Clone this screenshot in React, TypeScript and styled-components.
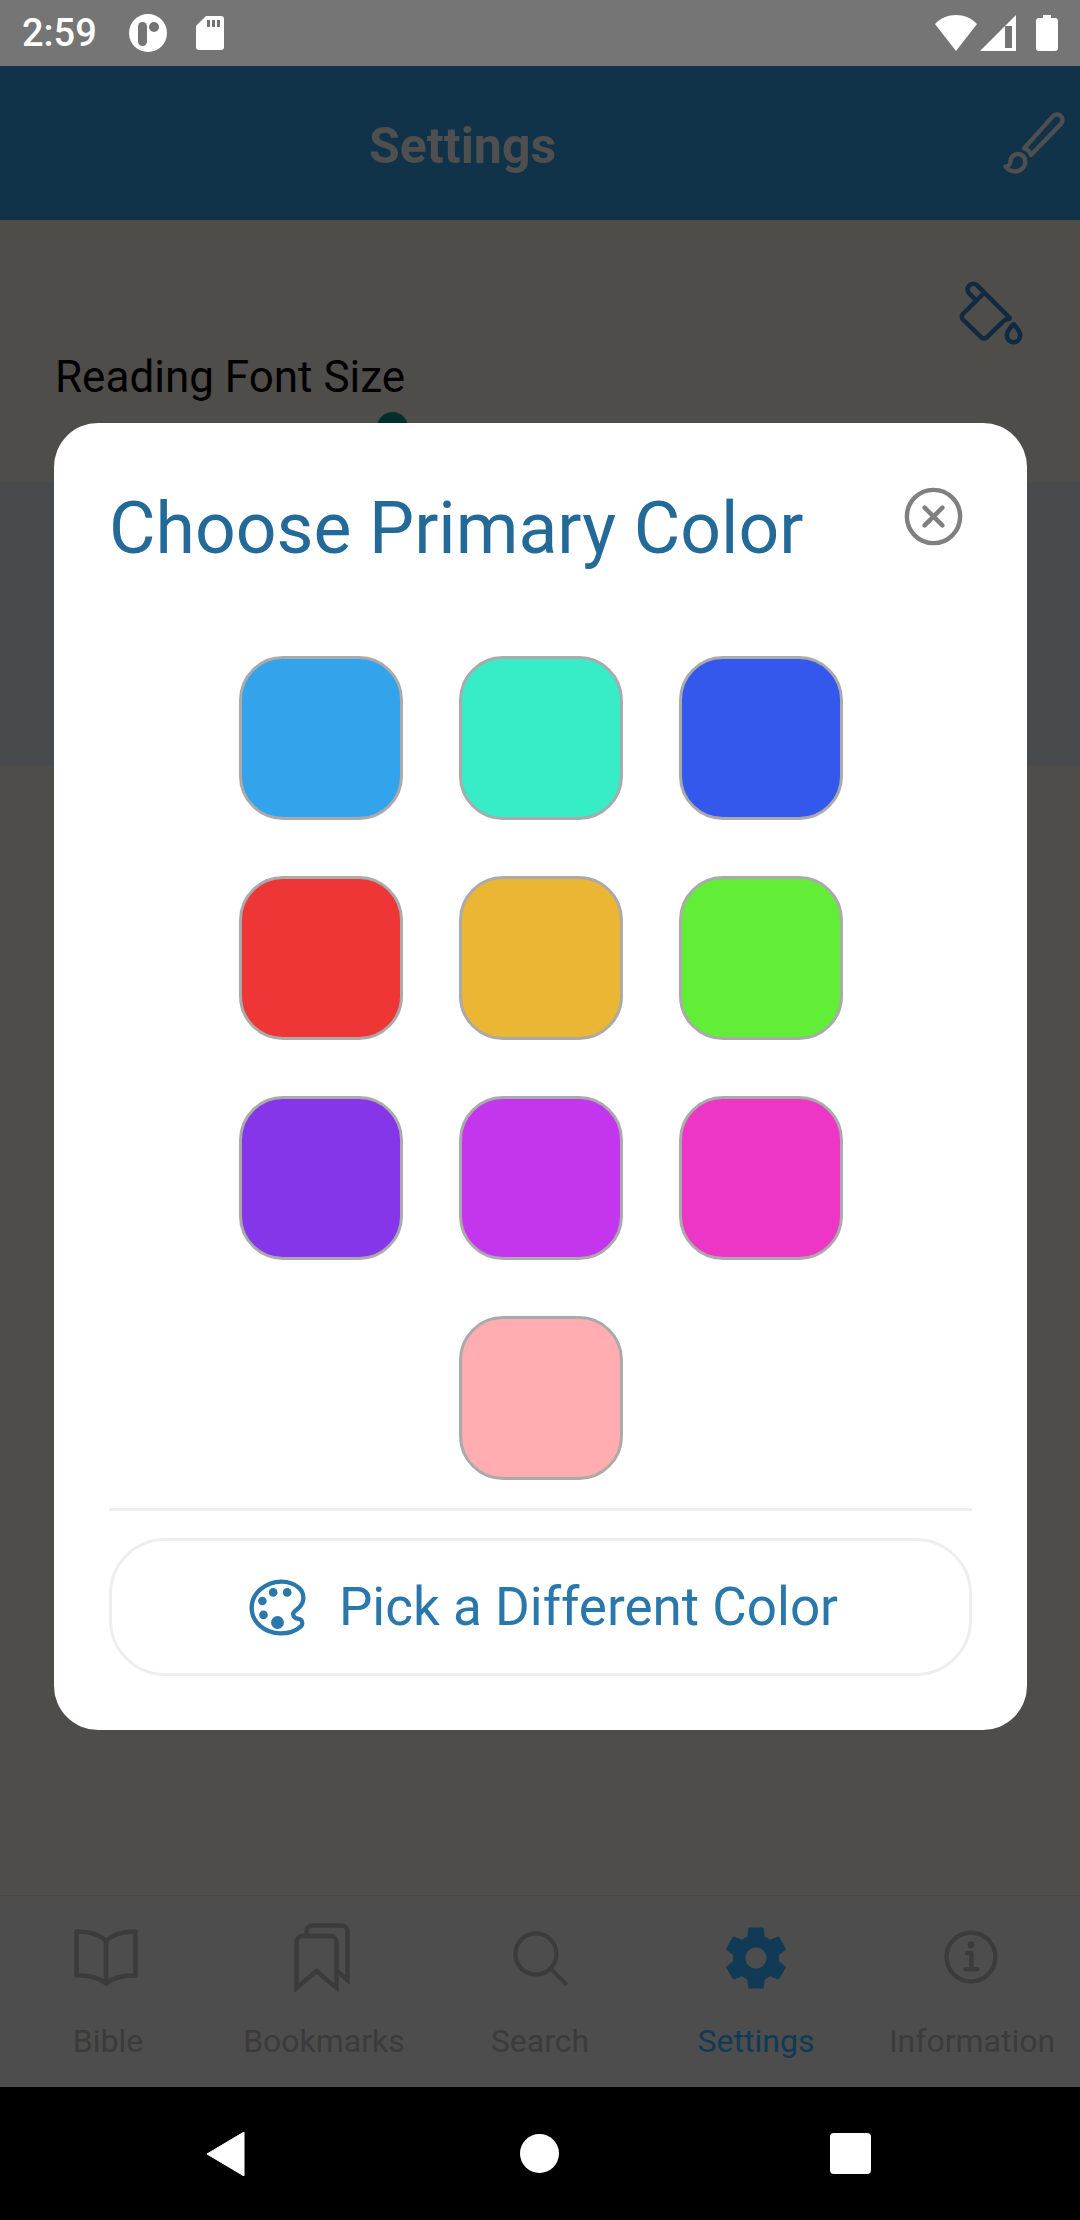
import styled, { createGlobalStyle } from "styled-components";
import {
  IoBrushOutline,
  IoCloseCircleOutline,
  IoColorFillOutline,
  IoColorPaletteOutline,
  IoInformationCircleOutline,
  IoSearchOutline,
  IoSettingsSharp,
} from "react-icons/io5";

const swatches = [
  "#33a3ec",
  "#36edc8",
  "#3458ec",
  "#ee3636",
  "#eab634",
  "#62ee36",
  "#8436e8",
  "#c436ee",
  "#ee36c6",
  "#ffadb0",
];

const BibleIcon = () => (
  <svg width="68" height="58" viewBox="0 0 68 58" fill="none" stroke="currentColor" strokeWidth="4.5" strokeLinejoin="round">
    <path d="M32 12C25 5 15 2.500 4 2.500H2.500V46.500H6C16 46.500 25 49 32 54.500C39 49 48 46.500 58 46.500H61.500V2.500H60C49 2.500 39 5 32 12V54" />
  </svg>
);

const BookmarksIcon = () => (
  <svg width="60" height="72" viewBox="0 0 60 72" fill="none" stroke="currentColor" strokeWidth="4.5">
    <path d="M2.500 20a6 6 0 0 1 6-6h28a6 6 0 0 1 6 6v46L22.500 49 2.500 66z" />
    <path d="M12.500 14V9.500a6 6 0 0 1 6-6h29a6 6 0 0 1 6 6V58L43 49" />
  </svg>
);

const tabs = [
  { label: "Bible", Icon: BibleIcon },
  { label: "Bookmarks", Icon: BookmarksIcon },
  { label: "Search", Icon: () => <IoSearchOutline size={67} /> },
  { label: "Settings", Icon: () => <IoSettingsSharp size={68} />, active: true },
  { label: "Information", Icon: () => <IoInformationCircleOutline size={68} /> },
];

export default function App() {
  return (
    <Page>
      <GlobalStyle />
      <StatusBar>
        <StatusLeft>
          <Clock>2:59</Clock>
          <svg width="38" height="38" viewBox="0 0 38 38">
            <circle cx="19" cy="19" r="19" fill="#fff" />
            <rect x="9" y="8" width="9" height="24" rx="4.500" fill="#757575" />
            <circle cx="25" cy="13" r="5" fill="#757575" />
          </svg>
          <svg width="28" height="34" viewBox="0 0 28 34">
            <path
              d="M10 0h15a3 3 0 0 1 3 3v28a3 3 0 0 1-3 3H3a3 3 0 0 1-3-3V10z"
              fill="#fff"
            />
            <path d="M11 4h3v7h-3zM16 4h3v7h-3zM21 4h3v7h-3z" fill="#757575" />
          </svg>
        </StatusLeft>
        <StatusRight>
          <svg width="42" height="36" viewBox="0 0 42 36">
            <path d="M0 9C11-3 31-3 42 9L21 36z" fill="#fff" />
          </svg>
          <svg width="36" height="36" viewBox="0 0 36 36">
            <path d="M36 0v36H0z" fill="#fff" />
            <path d="M25 11h7v22h-7z" fill="#757575" />
          </svg>
          <BatteryIcon width="22" height="36" viewBox="0 0 22 36">
            <path
              d="M7 0h8v3h4a3 3 0 0 1 3 3v27a3 3 0 0 1-3 3H3a3 3 0 0 1-3-3V6a3 3 0 0 1 3-3h4z"
              fill="#fff"
            />
          </BatteryIcon>
        </StatusRight>
      </StatusBar>

      <Header>
        <HeaderTitle>Settings</HeaderTitle>
        <IoBrushOutline size={70} color="#4f4f4f" />
      </Header>

      <Content>
        <FontSection>
          <BucketRow>
            <IoColorFillOutline size={72} color="#0f2a42" />
          </BucketRow>
          <FontLabel>Reading Font Size</FontLabel>
          <SliderThumb />
        </FontSection>
        <Band />
      </Content>

      <TabBar>
        {tabs.map(({ label, Icon, active }) => (
          <Tab key={label} $active={active}>
            <TabIcon>
              <Icon />
            </TabIcon>
            <TabLabel>{label}</TabLabel>
          </Tab>
        ))}
      </TabBar>

      <NavBar>
        <svg width="40" height="44" viewBox="0 0 40 44">
          <path d="M38 0v44L1 22z" fill="#fff" stroke="#fff" strokeLinejoin="round" />
        </svg>
        <HomeDot />
        <RecentSquare />
      </NavBar>

      <Modal>
        <ModalHead>
          <ModalTitle>Choose Primary Color</ModalTitle>
          <CloseIcon size={71} color="#808080" />
        </ModalHead>
        <SwatchGrid>
          {swatches.map((color) => (
            <Swatch key={color} $color={color} />
          ))}
        </SwatchGrid>
        <Divider />
        <PickButton>
          <IoColorPaletteOutline size={69} />
          Pick a Different Color
        </PickButton>
      </Modal>
    </Page>
  );
}

const GlobalStyle = createGlobalStyle`
  html, body {
    margin: 0;
    padding: 0;
    background: #000;
  }
  body {
    font-family: Roboto, "Liberation Sans", sans-serif;
  }
`;

const Page = styled.div`
  position: relative;
  display: flex;
  flex-direction: column;
  width: 1080px;
  height: 2220px;
  overflow: hidden;
`;

const StatusBar = styled.div`
  display: flex;
  align-items: center;
  justify-content: space-between;
  height: 66px;
  padding: 0 22px;
  background: #757575;
`;

const StatusLeft = styled.div`
  display: flex;
  align-items: center;
  gap: 29px;
`;

const StatusRight = styled.div`
  display: flex;
  align-items: center;
  gap: 3px;
`;

const BatteryIcon = styled.svg`
  margin-left: 17px;
`;

const Clock = styled.span`
  color: #fff;
  font-size: 38px;
  font-weight: 500;
  margin-right: 3px;
`;

const Header = styled.div`
  display: flex;
  align-items: center;
  justify-content: space-between;
  height: 154px;
  padding: 0 11px 0 369px;
  background: #10334a;
`;

const HeaderTitle = styled.h1`
  margin: 5px 0 0;
  color: #4f4f4f;
  font-size: 50px;
  font-weight: 700;
`;

const Content = styled.div`
  flex: 1;
  display: flex;
  flex-direction: column;
  background: #4f4d49;
`;

const FontSection = styled.div`
  display: flex;
  flex-direction: column;
  box-sizing: border-box;
  height: 262px;
  padding: 57px 55px 0;
  overflow: hidden;
`;

const BucketRow = styled.div`
  display: flex;
  justify-content: flex-end;
  height: 74px;
  margin-right: -2px;
`;

const FontLabel = styled.div`
  color: #000;
  font-size: 44px;
  line-height: 52px;
`;

const SliderThumb = styled.div`
  width: 31px;
  height: 31px;
  margin: 9px 0 0 322px;
  border-radius: 50%;
  background: #052f2d;
`;

const Band = styled.div`
  height: 283px;
  background: #484b4e;
`;

const TabBar = styled.div`
  display: grid;
  grid-template-columns: repeat(5, 1fr);
  box-sizing: border-box;
  height: 192px;
  background: #4d4d4d;
  border-top: 1px solid #464646;
`;

const Tab = styled.div<{ $active?: boolean }>`
  display: flex;
  flex-direction: column;
  align-items: center;
  color: ${(p) => (p.$active ? "#103a55" : "#3b3b3b")};
`;

const TabIcon = styled.div`
  display: flex;
  align-items: center;
  justify-content: center;
  height: 82px;
  margin-top: 21px;
`;

const TabLabel = styled.span`
  margin-top: 22px;
  font-size: 32px;
  line-height: 40px;
`;

const NavBar = styled.div`
  display: flex;
  align-items: center;
  justify-content: space-between;
  height: 133px;
  padding: 0 209px 0 206px;
  background: #000;
`;

const HomeDot = styled.div`
  width: 39px;
  height: 39px;
  margin-left: 3px;
  border-radius: 50%;
  background: #fff;
`;

const RecentSquare = styled.div`
  width: 41px;
  height: 41px;
  border-radius: 4px;
  background: #fff;
`;

const Modal = styled.div`
  position: absolute;
  top: 423px;
  left: 54px;
  box-sizing: border-box;
  width: 973px;
  height: 1307px;
  padding: 0 55px;
  border-radius: 44px;
  background: #fff;
`;

const ModalHead = styled.div`
  display: flex;
  align-items: flex-start;
  justify-content: space-between;
  box-sizing: border-box;
  height: 168px;
  padding-top: 58px;
  margin-bottom: 7px;
`;

const CloseIcon = styled(IoCloseCircleOutline)`
  margin-right: 3px;
`;

const ModalTitle = styled.h2`
  margin: 9px 0 0;
  color: #246a99;
  font-size: 71.500px;
  font-weight: 400;
  line-height: 77px;
`;

const SwatchGrid = styled.div`
  display: flex;
  flex-wrap: wrap;
  justify-content: center;
  gap: 56px;
  width: 604px;
  margin: 65px auto 0;
`;

const Swatch = styled.div<{ $color: string }>`
  box-sizing: border-box;
  width: 164px;
  height: 164px;
  border: 3px solid #aaa;
  border-radius: 44px;
  background: ${(p) => p.$color};
`;

const Divider = styled.div`
  height: 3px;
  margin-top: 28px;
  background: #eee;
`;

const PickButton = styled.div`
  display: flex;
  align-items: center;
  justify-content: center;
  gap: 27px;
  box-sizing: border-box;
  height: 138px;
  margin-top: 27px;
  border: 3px solid #eee;
  border-radius: 56px;
  color: #2a78ab;
  font-size: 53px;
`;
